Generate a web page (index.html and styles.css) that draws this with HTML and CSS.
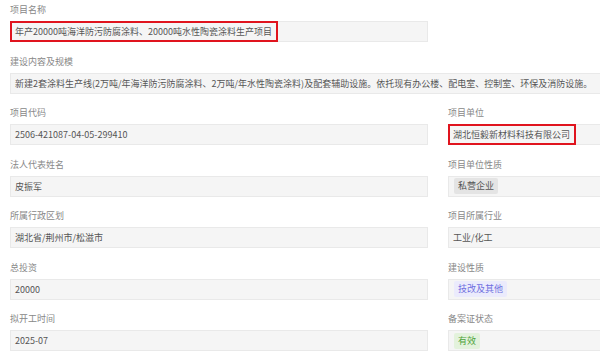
FILE: index.html
```html
<!DOCTYPE html>
<html lang="zh-CN">
<head>
    <meta charset="UTF-8">
    <meta name="viewport" content="width=device-width, initial-scale=1.0">
    <title>项目信息</title>
    <link rel="stylesheet" href="styles.css">
</head>
<body>
    <div class="page">
        <div class="field half">
            <div class="label">项目名称</div>
            <div class="box"><span class="hl">年产20000吨海洋防污防腐涂料、20000吨水性陶瓷涂料生产项目</span></div>
        </div>
        <div class="field wide">
            <div class="label">建设内容及规模</div>
            <div class="box">新建2套涂料生产线(2万吨/年海洋防污防腐涂料、2万吨/年水性陶瓷涂料)及配套辅助设施。依托现有办公楼、配电室、控制室、环保及消防设施。</div>
        </div>

        <div class="grid">
            <div class="field">
                <div class="label">项目代码</div>
                <div class="box">2506-421087-04-05-299410</div>
            </div>
            <div class="field wide">
                <div class="label">项目单位</div>
                <div class="box"><span class="hl">湖北恒毅新材料科技有限公司</span></div>
            </div>

            <div class="field">
                <div class="label">法人代表姓名</div>
                <div class="box">皮振军</div>
            </div>
            <div class="field wide">
                <div class="label">项目单位性质</div>
                <div class="box"><span class="tag gray">私营企业</span></div>
            </div>

            <div class="field">
                <div class="label">所属行政区划</div>
                <div class="box">湖北省/荆州市/松滋市</div>
            </div>
            <div class="field wide">
                <div class="label">项目所属行业</div>
                <div class="box">工业/化工</div>
            </div>

            <div class="field">
                <div class="label">总投资</div>
                <div class="box">20000</div>
            </div>
            <div class="field wide">
                <div class="label">建设性质</div>
                <div class="box"><span class="tag blue">技改及其他</span></div>
            </div>

            <div class="field">
                <div class="label">拟开工时间</div>
                <div class="box">2025-07</div>
            </div>
            <div class="field wide">
                <div class="label">备案证状态</div>
                <div class="box"><span class="tag green">有效</span></div>
            </div>
        </div>
    </div>
</body>
</html>
```

FILE: styles.css
```css
* {
    margin: 0;
    padding: 0;
    box-sizing: border-box;
}
body {
    background-color: #fff;
    font-family: "Noto Sans CJK SC", "Microsoft YaHei", sans-serif;
    font-size: 9px;
}
.page {
    width: 600px;
    height: 357px;
    padding-left: 10px;
    overflow: hidden;
}
.grid {
    display: grid;
    grid-template-columns: 418px 1fr;
    column-gap: 20px;
}
.field {
    margin-bottom: 9.5px;
}
.half {
    width: 418px;
}
.wide .box {
    margin-right: -1px;
}
.label {
    height: 21px;
    line-height: 19px;
    color: #888;
}
.box {
    display: flex;
    align-items: center;
    height: 21px;
    padding-left: 4px;
    background-color: #f5f5f5;
    border: 1px solid #e9e9e9;
    color: #555;
    white-space: nowrap;
}
.hl {
    display: flex;
    align-items: center;
    align-self: stretch;
    margin: -1px 0 -1px -5px;
    padding: 0 4px 0 3px;
    border: 2px solid #e0141e;
}
.tag {
    display: inline-block;
    height: 16px;
    line-height: 16px;
    padding: 0 4px;
    margin-left: 1px;
    border-radius: 2px;
}
.gray {
    background-color: #e4e4e4;
    color: #555;
}
.blue {
    background-color: #ebebfc;
    color: #6f6fe0;
}
.green {
    background-color: #e3f2dc;
    color: #4ca23a;
}
```
